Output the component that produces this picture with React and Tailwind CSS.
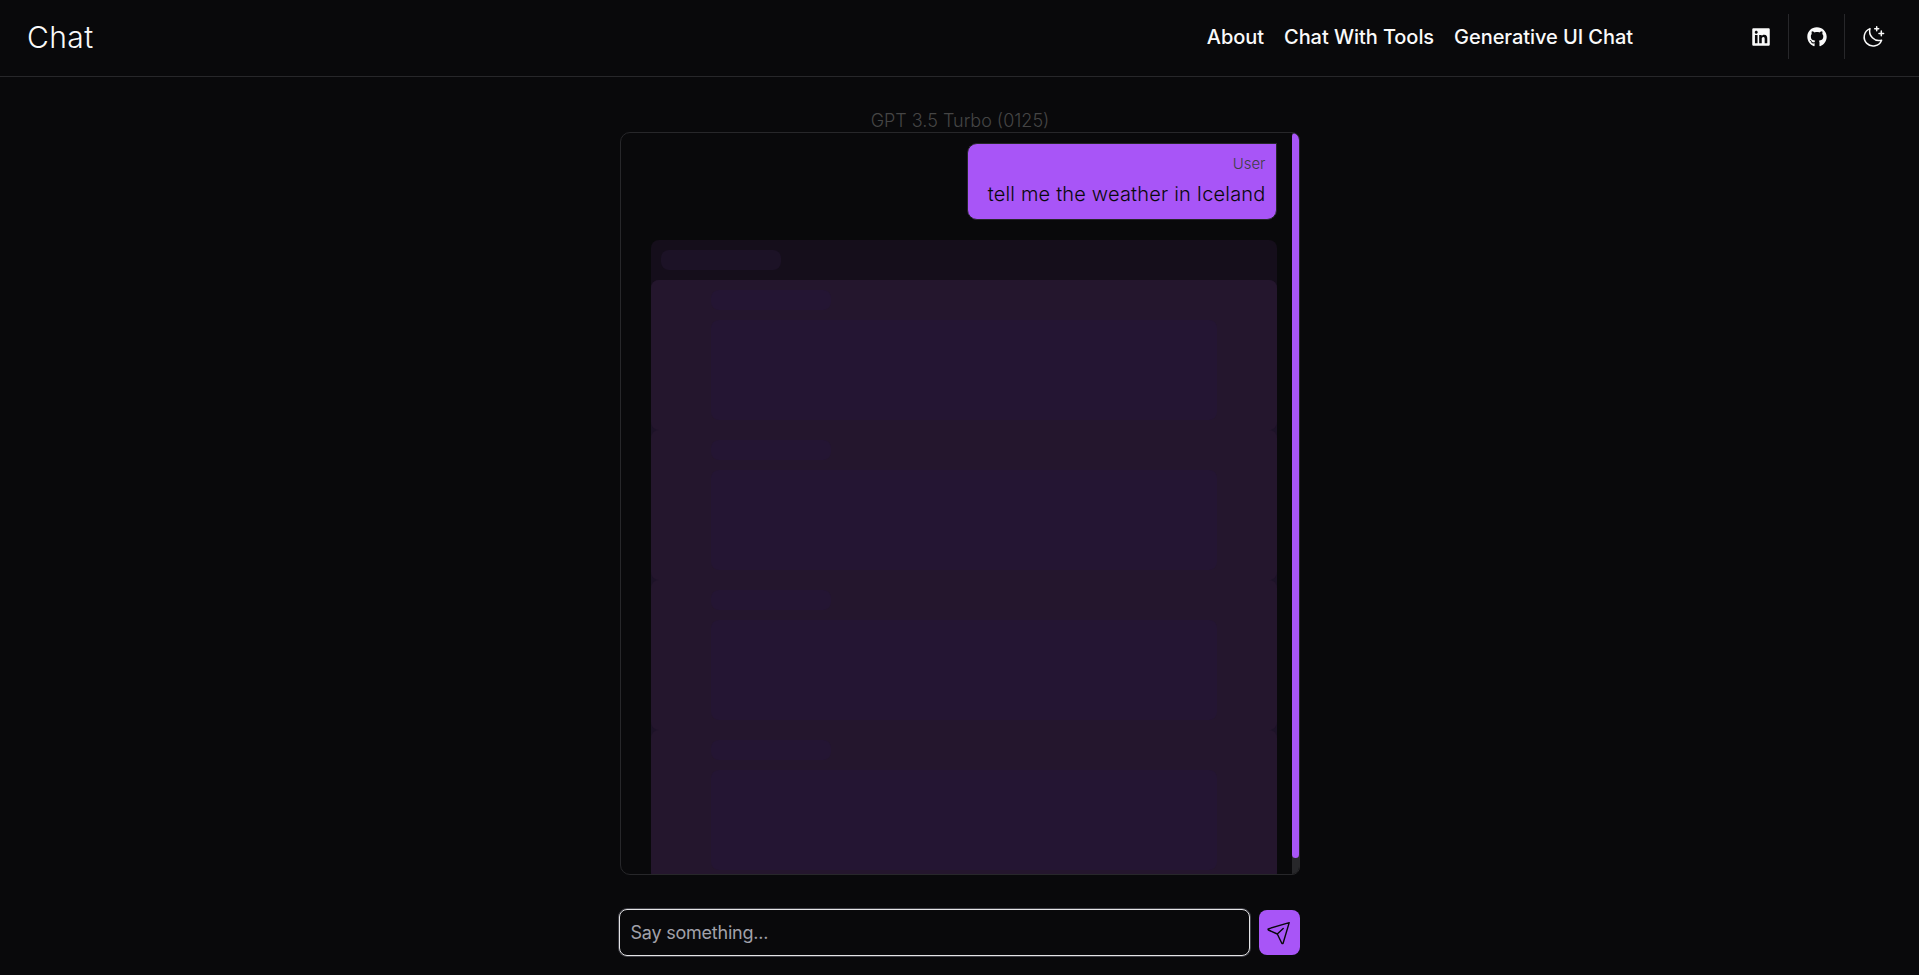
import { FaLinkedin, FaGithub } from "react-icons/fa";

const links = ["About", "Chat With Tools", "Generative UI Chat"];

function MoonIcon() {
  return (
    <svg viewBox="0 0 24 24" className="size-6" fill="none" stroke="currentColor" strokeWidth="1.5" strokeLinecap="round" strokeLinejoin="round">
      <path d="M9 3.6 A9 9 0 1 0 20.6 15.2 A9.4 9.4 0 0 1 9 3.6 Z" />
      <path d="M15.7 1.8v4M13.7 3.8h4M20.3 6.1v4.6M18 8.4h4.6" />
    </svg>
  );
}

function Header() {
  return (
    <header className="flex h-[77px] items-center border-b border-[#27272a] pb-[3px] pl-[27px] pr-[18px]">
      <h1 className="grow text-[30px] leading-9 font-light tracking-[0.4px]">Chat</h1>
      <nav className="mr-[100px] flex gap-5 text-xl font-medium tracking-[-0.06px]">
        {links.map((l) => (
          <a key={l}>{l}</a>
        ))}
      </nav>
      <div className="flex h-[45px] divide-x divide-[#27272a]">
        <span className="flex w-14 items-center justify-center">
          <FaLinkedin className="size-5" />
        </span>
        <span className="flex w-14 items-center justify-center">
          <FaGithub className="size-5" />
        </span>
        <span className="flex w-14 items-center justify-center">
          <MoonIcon />
        </span>
      </div>
    </header>
  );
}

function SkeletonCard() {
  return (
    <div className="h-[150px] shrink-0 rounded-lg bg-[#24162d] px-[60px] py-2.5">
      <div className="h-5 w-[120px] rounded-lg bg-[#241533]" />
      <div className="mt-2.5 h-[100px] rounded-lg bg-[#241533]" />
    </div>
  );
}

export default function App() {
  return (
    <div className="flex h-[975px] flex-col bg-[#09090b] font-['Inter',sans-serif] text-[#fafafa]">
      <Header />
      <main className="mx-auto flex w-[682px] flex-col">
        <p className="mt-8 h-[23px] pl-px text-center text-lg leading-6 font-light text-[#454545]">GPT 3.5 Turbo (0125)</p>
        <section className="ml-px flex h-[743px] w-[680px] overflow-hidden rounded-[10px] rounded-r-lg border border-[#27272a]">
          <div className="flex w-[656px] flex-col pl-[30px] pt-2.5">
            <div className="flex h-[77px] shrink-0 flex-col items-end self-end rounded-[10px] rounded-tr-none border border-[#27272a] bg-[#a855f7] pt-2.5 pr-2.5 pl-5">
              <span className="text-[15px] leading-5 font-light text-[#3f3f46]">User</span>
              <p className="mt-1.5 text-xl leading-7 font-light tracking-[0.18px] text-[#09090b]">tell me the weather in Iceland</p>
            </div>
            <div className="mt-5 flex shrink-0 flex-col rounded-lg bg-[#150e1b]">
              <div className="h-10 p-2.5">
                <div className="h-5 w-[120px] rounded-lg bg-[#1c1226]" />
              </div>
              <div className="rounded-t-lg bg-[#1d1328]">
                <SkeletonCard />
                <SkeletonCard />
                <SkeletonCard />
                <SkeletonCard />
              </div>
            </div>
          </div>
          <div className="ml-[15px] w-[7px] bg-[#27272a]">
            <div className="h-[725px] rounded-full bg-[#a855f7]" />
          </div>
        </section>
        <form className="mt-[34px] flex h-[47px] w-[681px] items-center justify-between">
          <div className="flex h-[47px] w-[631px] items-center rounded-lg border border-[#e4e4e7] px-[11px] text-lg tracking-[-0.22px] text-[#a1a1aa] ring-1 ring-[#3f3f46]">
            Say something...
          </div>
          <button type="button" className="flex h-[45px] w-[41px] items-center justify-center rounded-lg bg-[#a855f7] text-[#09090b]">
            <svg viewBox="0 0 24 24" className="size-6" fill="none" stroke="currentColor" strokeWidth="1.4" strokeLinejoin="round" strokeLinecap="round">
              <path d="M22.2 1.6 L1.4 7.8 Q0.8 8.4 1.4 9 L10.3 13 L14.8 22.2 Q15.5 22.9 16.1 22.2 Z M10.3 13 L16.2 7.5" />
            </svg>
          </button>
        </form>
      </main>
    </div>
  );
}
